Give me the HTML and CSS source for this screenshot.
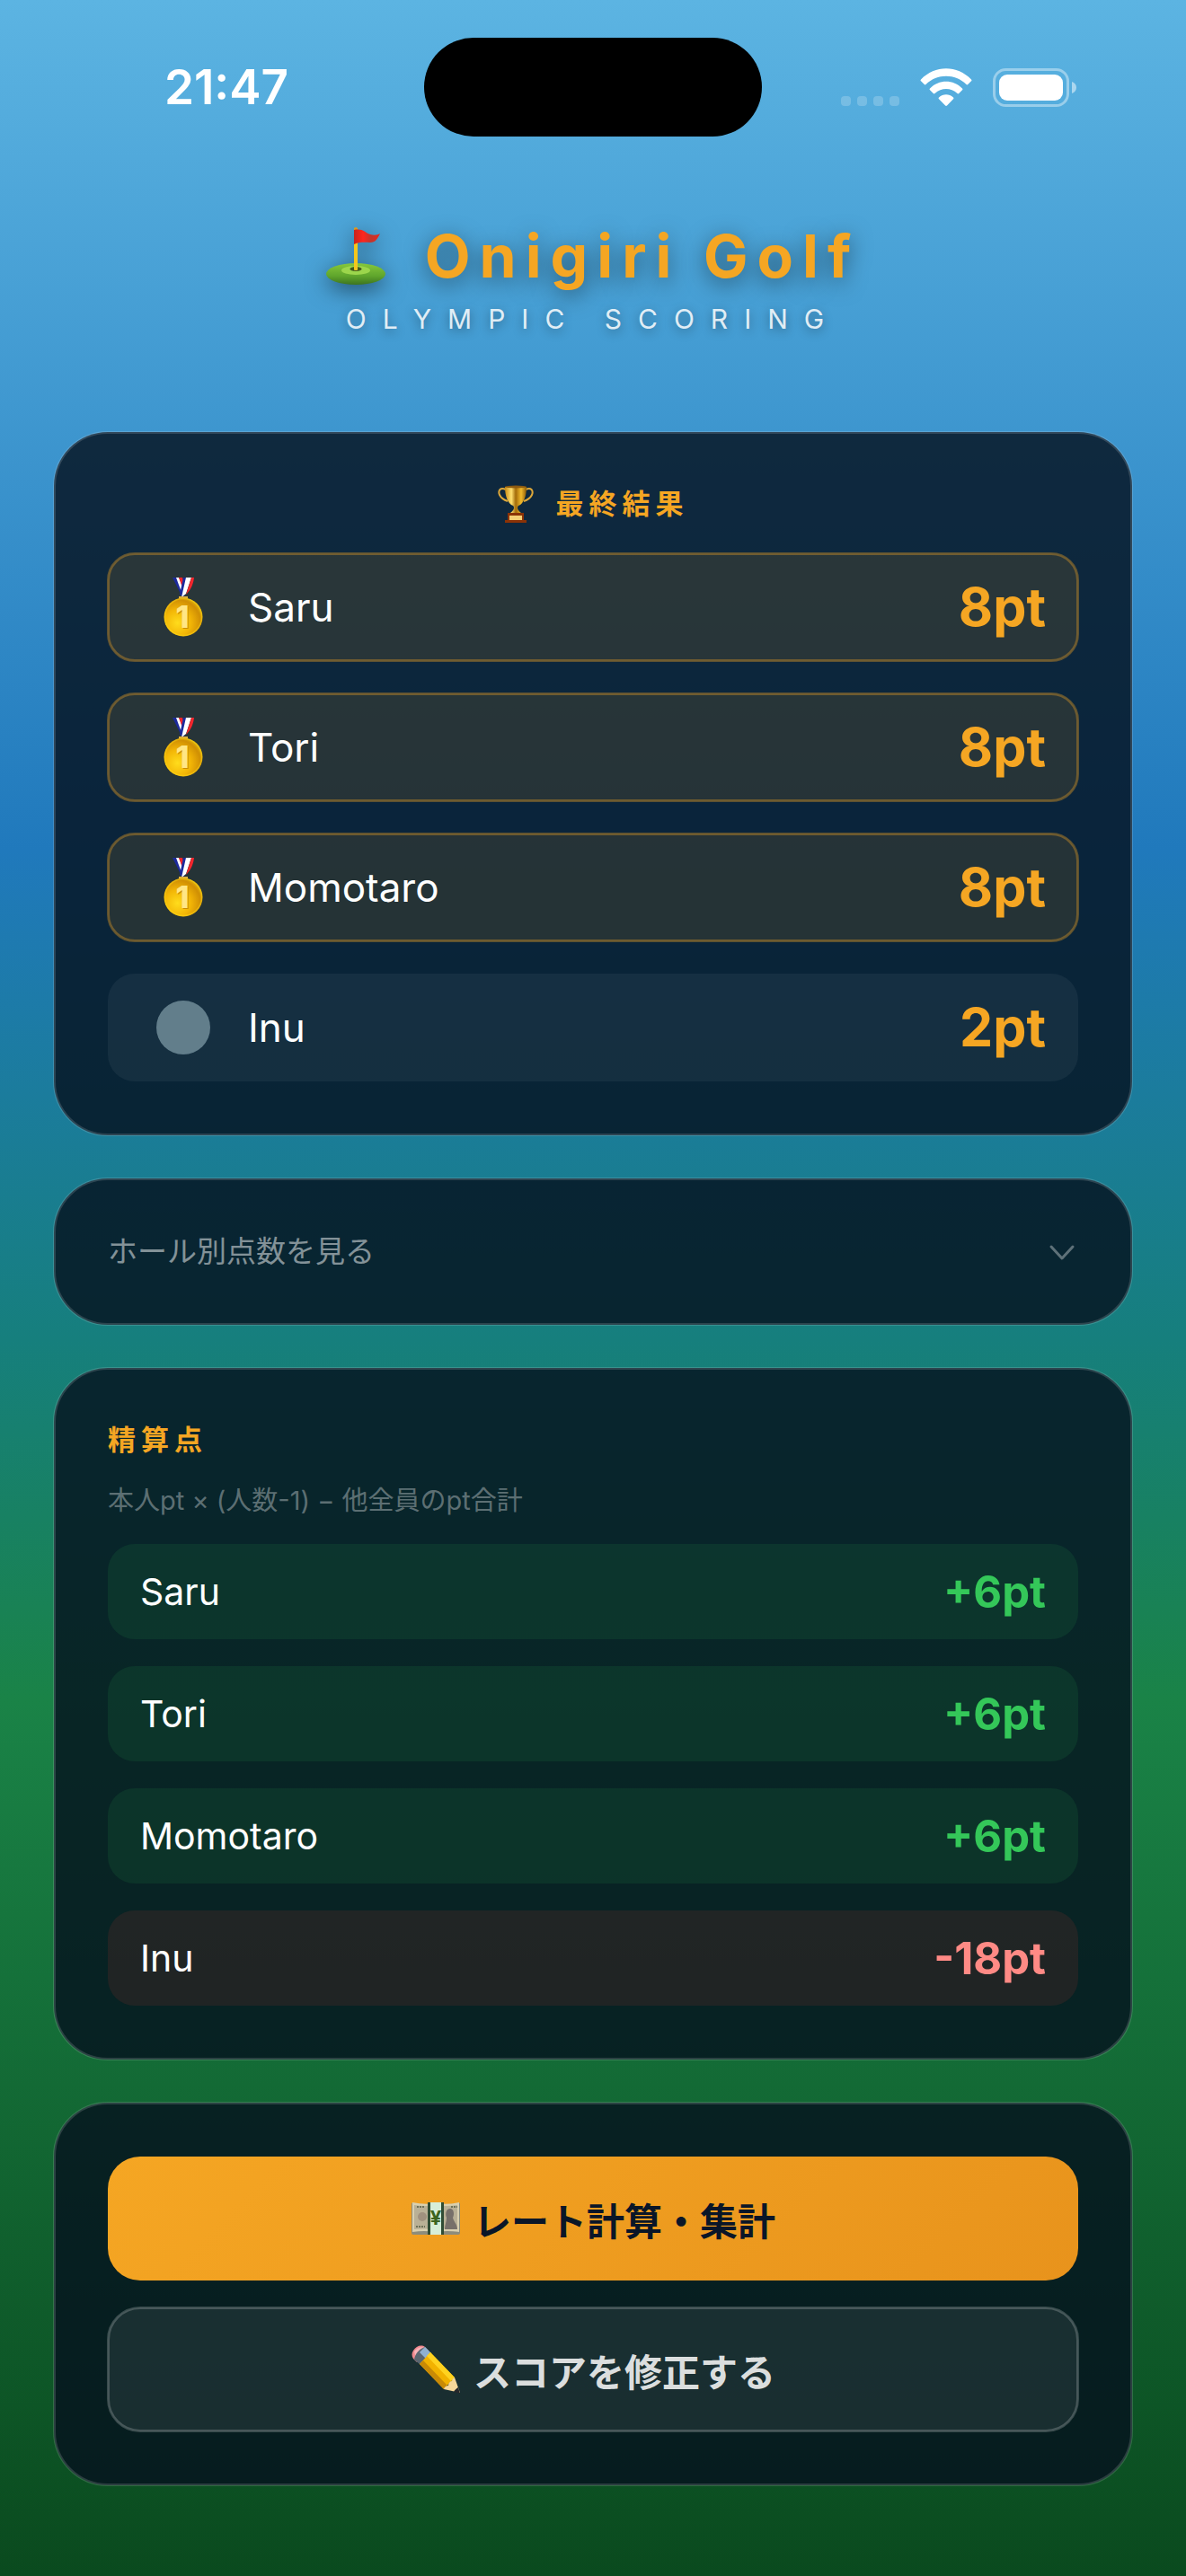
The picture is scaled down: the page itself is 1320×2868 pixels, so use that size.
FILE: index.html
```html
<!DOCTYPE html>
<html lang="ja">
<head>
  <meta charset="UTF-8" />
  <meta name="viewport" content="width=device-width, initial-scale=1.0" />
  <title>Onigiri Golf</title>
  <link rel="stylesheet" href="styles.css">
</head>
<body>
  <!-- shared icons -->
  <svg class="defs" width="0" height="0" aria-hidden="true">
    <defs>
      <radialGradient id="gold" cx="0.35" cy="0.65" r="0.75">
        <stop offset="0" stop-color="#ffdc1c" />
        <stop offset="0.45" stop-color="#f3b606" />
        <stop offset="0.8" stop-color="#d08f04" />
        <stop offset="1" stop-color="#e8c010" />
      </radialGradient>
      <symbol id="medal" viewBox="0 0 44 66">
        <path d="M10 0h5l9 19-3 3z" fill="#1c2a9c" />
        <path d="M14 0h3l6 14-2 5z" fill="#fff" />
        <path d="M17 0h4l3 10-2 4z" fill="#f3262d" />
        <path d="M22 0h4l-5 21-3-2z" fill="#1c2a9c" />
        <path d="M25 0h6l-6 18-5 4z" fill="#fff" />
        <path d="M31 0h3c-1 8-4 14-9 19z" fill="#f3262d" />
        <path d="M18 24v-2h8v2" fill="none" stroke="#e0b040" stroke-width="2" />
        <circle cx="22" cy="44" r="21.500" fill="url(#gold)" />
        <circle cx="22" cy="44" r="20.500" fill="none" stroke="#ffe11a" stroke-opacity="0.4" stroke-width="1.500" />
        <text class="medal-shade" x="22" y="57" text-anchor="middle">1</text>
        <text class="medal-num" x="21" y="56" text-anchor="middle">1</text>
      </symbol>
    </defs>
  </svg>

  <div class="status-bar">
    <div class="status-time">21:47</div>
    <div class="island"></div>
    <div class="status-icons">
      <svg width="65" height="43" viewBox="0 0 65 43" fill="#fff" fill-opacity="0.2">
        <rect x="0" y="31" width="11" height="11" rx="4" />
        <rect x="18" y="31" width="11" height="11" rx="4" />
        <rect x="36" y="31" width="11" height="11" rx="4" />
        <rect x="54" y="31" width="11" height="11" rx="4" />
      </svg>
      <svg width="58" height="43" viewBox="0 0 58 43" fill="#fff">
        <path d="M1 12.500C16.500-3.800 41.500-3.800 57 12.500c.6.600.6 1.200 0 1.800l-3.800 3.700c-.6.600-1.100.6-1.700 0C39 5.700 19 5.700 6.500 18c-.6.600-1.100.6-1.700 0L1 14.300c-.6-.6-.6-1.200 0-1.800z" />
        <path d="M11 22.500c10-10.300 26-10.300 36 0 .6.600.6 1.200 0 1.800l-3.800 3.800c-.6.600-1.100.6-1.700 0-7.200-6.800-17.800-6.800-25 0-.6.600-1.100.6-1.700 0L11 24.300c-.6-.6-.6-1.200 0-1.800z" />
        <path d="M21 32.500c4.600-4.300 11.400-4.300 16 0 .6.600.6 1.200 0 1.800L30 41.500c-.6.600-1.300.6-1.900 0L21 34.300c-.6-.6-.6-1.200 0-1.800z" />
      </svg>
      <svg width="93" height="43" viewBox="0 0 93 43">
        <rect x="1.500" y="1.500" width="82" height="40" rx="13" fill="none" stroke="#fff" stroke-opacity="0.4" stroke-width="3" />
        <rect x="7" y="7" width="71" height="29" rx="9" fill="#fff" />
        <path d="M88 15c3 1 5 3.500 5 6.500s-2 5.500-5 6.500z" fill="#fff" fill-opacity="0.5" />
      </svg>
    </div>
  </div>

  <header class="header">
    <h1 class="logo">
      <svg class="logo-flag" width="66" height="64" viewBox="0 0 66 64">
        <defs>
          <linearGradient id="grass" x1="0" y1="0" x2="0" y2="1">
            <stop offset="0" stop-color="#86c83c" />
            <stop offset="0.6" stop-color="#5fa52c" />
            <stop offset="1" stop-color="#3d7420" />
          </linearGradient>
          <linearGradient id="flag" x1="0" y1="0" x2="1" y2="0">
            <stop offset="0" stop-color="#c8231c" />
            <stop offset="0.35" stop-color="#ff261e" />
            <stop offset="0.65" stop-color="#c2352c" />
            <stop offset="1" stop-color="#e8281f" />
          </linearGradient>
        </defs>
        <ellipse cx="33" cy="52" rx="33" ry="12" fill="url(#grass)" />
        <ellipse cx="33" cy="48" rx="16" ry="5" fill="#9cd64c" />
        <ellipse cx="33" cy="46.500" rx="6.500" ry="2.500" fill="#41581f" />
        <rect x="31" y="1" width="4" height="47" rx="1" fill="#f5c61c" />
        <circle cx="33" cy="2" r="2" fill="#d89a20" />
        <path d="M31 3c10-2 12 3 18 5 4 1 8 1 11-1-3 6-5 10-11 10-7 0-11-1-18 2z" fill="url(#flag)" />
      </svg>
      <span>Onigiri Golf</span>
    </h1>
    <p class="tagline">OLYMPIC SCORING</p>
  </header>

  <main class="content">
    <section class="card result-card">
      <h2 class="card-title centered">
        <svg width="40" height="42" viewBox="0 0 40 42">
          <defs>
            <linearGradient id="cup" x1="0" y1="0" x2="1" y2="0">
              <stop offset="0" stop-color="#c88a12" />
              <stop offset="0.3" stop-color="#ffe070" />
              <stop offset="0.5" stop-color="#a36a08" />
              <stop offset="0.75" stop-color="#f0b92c" />
              <stop offset="1" stop-color="#8c5a06" />
            </linearGradient>
          </defs>
          <path d="M9 5C3 2 0 6 2 11c2 4 6 6 9 7M31 5c6-3 9 1 7 6-2 4-6 6-9 7" fill="none" stroke="#dca73a" stroke-width="2" />
          <path d="M8 2h24c0 10-3 19-9 21-2 2-1 5 3 8H14c4-3 5-6 3-8C11 21 8 12 8 2z" fill="url(#cup)" />
          <ellipse cx="20" cy="2" rx="12" ry="1.500" fill="#8c5a10" />
          <path d="M11 31h18v8h3v3H8v-3h3z" fill="#8a3206" />
          <rect x="13" y="34" width="14" height="5" fill="#f4cf74" />
        </svg>
        <span>最終結果</span>
      </h2>
      <ol class="ranking">
        <li class="rank-row winner">
          <span class="badge"><svg width="44" height="66"><use href="#medal" /></svg></span>
          <span class="rank-name">Saru</span>
          <span class="rank-pt">8pt</span>
        </li>
        <li class="rank-row winner">
          <span class="badge"><svg width="44" height="66"><use href="#medal" /></svg></span>
          <span class="rank-name">Tori</span>
          <span class="rank-pt">8pt</span>
        </li>
        <li class="rank-row winner">
          <span class="badge"><svg width="44" height="66"><use href="#medal" /></svg></span>
          <span class="rank-name">Momotaro</span>
          <span class="rank-pt">8pt</span>
        </li>
        <li class="rank-row">
          <span class="badge"><span class="dot"></span></span>
          <span class="rank-name">Inu</span>
          <span class="rank-pt">2pt</span>
        </li>
      </ol>
    </section>

    <section class="card">
      <button class="toggle" type="button" aria-expanded="false">
        <span>ホール別点数を見る</span>
        <svg width="36" height="24" viewBox="0 0 36 24" fill="none" stroke="#fff" stroke-opacity="0.35" stroke-width="3" stroke-linecap="round" stroke-linejoin="round">
          <path d="M6 6l12 13L30 6" />
        </svg>
      </button>
    </section>

    <section class="card settle-card">
      <h2 class="card-title">精算点</h2>
      <p class="formula">本人pt × (人数-1) − 他全員のpt合計</p>
      <ul class="settle-list">
        <li class="settle-row plus"><span>Saru</span><strong>+6pt</strong></li>
        <li class="settle-row plus"><span>Tori</span><strong>+6pt</strong></li>
        <li class="settle-row plus"><span>Momotaro</span><strong>+6pt</strong></li>
        <li class="settle-row minus"><span>Inu</span><strong>-18pt</strong></li>
      </ul>
    </section>

    <section class="card actions">
      <button class="btn btn-primary" type="button">
        <svg width="56" height="56" viewBox="0 0 56 56">
          <path d="M1 11q14 2 27 0 13 2 27 0v33q0 2-2 2H3q-2 0-2-2z" fill="#8c8c7c" />
          <path d="M2 10q13 3 26 1 13 2 26-1v33q-13-2-26 0-13-2-26 0z" fill="#d9d0b0" />
          <path d="M4 13q12 2 24 0 12 2 24 0v27q-12-1-24 0-12-1-24 0z" fill="#b9b096" />
          <circle cx="13" cy="26" r="5" fill="#a0917f" />
          <path d="M7 15h9M6 37h10M45 15h7" stroke="#6d7158" stroke-width="2" stroke-dasharray="2 1" />
          <path d="M38 40c0-5 2-8 2-13-2-5 0-10 4-10s5 6 3 10c1 5 5 7 5 13z" fill="#77706a" />
          <rect x="19" y="10" width="18" height="36" fill="#2f4c34" />
          <rect x="22" y="10" width="12" height="36" fill="#d7eed8" />
          <text class="yen" x="28" y="35" text-anchor="middle">¥</text>
        </svg>
        <span>レート計算・集計</span>
      </button>
      <button class="btn btn-secondary" type="button">
        <svg width="56" height="56" viewBox="0 0 56 56">
          <path d="M3 7c3-5 9-7 13-4l4 4L7 20l-4-4c-2-3-2-6 0-9z" fill="#f08a90" />
          <path d="M4 8c3-4 8-6 11-4l2 2L6 16z" fill="#f9b4b8" />
          <path d="M16 3l7 7L11 23l-7-6c1-7 6-12 12-14z" fill="#5a6670" />
          <path d="M16 3l7 7-6 6-7-7z" fill="#8fb0cf" />
          <path d="M22 9l27 28-12 13L10 22z" fill="#f2b200" />
          <path d="M22 9l27 28-4 4L18 13z" fill="#ffd21f" />
          <path d="M14 18l27 28-4 4L10 22z" fill="#c98a06" />
          <path d="M49 37l6 17-18-4c1-3 3-4 5-4 0-3 2-5 4-5 0-2 1-3 3-4z" fill="#f7d79a" />
          <path d="M53 48l2 7-7-2c1-2 3-4 5-5z" fill="#25272b" />
        </svg>
        <span>スコアを修正する</span>
      </button>
    </section>
  </main>
</body>
</html>
```

FILE: styles.css
```css
:root {
  --gold: #f5a623;
  --green: #34c759;
  --red: #ff8a85;
}

* {
  box-sizing: border-box;
}

body {
  margin: 0;
  min-height: 100vh;
  padding-bottom: 100px;
  font-family: Inter, "Noto Sans CJK JP", sans-serif;
  color: #ffffff;
  background: linear-gradient(180deg, #5cb4e2 0%, #2079bc 33%, #167f7d 52%, #1a8347 66%, #0a4a1e 100%);
}

h1, h2, p, ol, ul {
  margin: 0;
  padding: 0;
}

ol, ul {
  list-style: none;
}

svg {
  display: block;
  flex-shrink: 0;
}

button {
  font-family: inherit;
  color: inherit;
  border: none;
  cursor: pointer;
}

.defs {
  position: absolute;
}

/* status bar */
.status-bar {
  display: grid;
  grid-template-columns: 1fr auto 1fr;
  align-items: center;
  padding-top: 42px;
}

.status-time {
  padding-left: 32px;
  text-align: center;
  font-size: 53px;
  line-height: 60px;
  font-weight: 600;
}

.island {
  width: 376px;
  height: 110px;
  border-radius: 55px;
  background: #000000;
}

.status-icons {
  display: flex;
  justify-content: flex-end;
  gap: 23px;
  padding-right: 122px;
}

/* header */
.header {
  padding: 93px 60px 108px;
  text-align: center;
}

.logo {
  display: flex;
  justify-content: center;
  align-items: center;
  gap: 44px;
  font-size: 66px;
  line-height: 80px;
  font-weight: 700;
  letter-spacing: 10px;
  color: var(--gold);
  text-shadow: 0 6px 24px rgba(0, 0, 0, 0.5);
}

.logo-flag {
  filter: drop-shadow(0 6px 12px rgba(0, 0, 0, 0.5));
}

.tagline {
  margin-top: 12px;
  font-size: 30px;
  line-height: 36px;
  letter-spacing: 18px;
  color: rgba(255, 255, 255, 0.85);
  text-shadow: 0 3px 12px rgba(0, 0, 0, 0.4);
}

/* cards */
.content {
  display: flex;
  flex-direction: column;
  gap: 48px;
  padding: 0 60px;
}

.card {
  padding: 60px;
  border-radius: 60px;
  background: rgba(5, 17, 30, 0.82);
  outline: 3px solid rgba(255, 255, 255, 0.15);
  outline-offset: -2px;
}

.card-title {
  display: flex;
  align-items: center;
  gap: 25px;
  font-size: 31px;
  line-height: 39px;
  font-weight: 700;
  letter-spacing: 6px;
  color: var(--gold);
}

.card-title svg {
  margin: -2px 0;
}

.centered {
  justify-content: center;
}

/* final result */
.ranking {
  display: flex;
  flex-direction: column;
  gap: 36px;
  margin-top: 36px;
}

.rank-row {
  display: flex;
  align-items: center;
  gap: 24px;
  height: 120px;
  padding: 0 36px;
  border-radius: 30px;
  background: rgba(255, 255, 255, 0.05);
}

.rank-row.winner {
  background: rgba(245, 166, 35, 0.12);
  outline: 3px solid rgba(245, 166, 35, 0.35);
  outline-offset: -2px;
}

.badge {
  display: flex;
  justify-content: center;
  width: 96px;
}

.dot {
  width: 60px;
  height: 60px;
  border-radius: 50%;
  background: #627e8b;
}

.medal-num,
.medal-shade {
  font-size: 34px;
  font-weight: 800;
  fill: #ffe684;
}

.medal-shade {
  fill: #c98c08;
}

.rank-name {
  flex: 1;
  font-size: 44px;
  line-height: 54px;
}

.rank-pt {
  font-size: 59px;
  line-height: 72px;
  font-weight: 700;
  color: var(--gold);
}

/* per-hole toggle */
.toggle {
  display: flex;
  justify-content: space-between;
  align-items: center;
  width: 100%;
  padding: 0;
  background: none;
  font-size: 33px;
  line-height: 43px;
  color: rgba(255, 255, 255, 0.5);
}

/* settlement */
.formula {
  margin-top: 30px;
  font-size: 29px;
  line-height: 37px;
  color: rgba(255, 255, 255, 0.35);
}

.settle-list {
  display: flex;
  flex-direction: column;
  gap: 30px;
  margin-top: 30px;
}

.settle-row {
  display: flex;
  justify-content: space-between;
  align-items: center;
  height: 106px;
  padding: 0 36px;
  border-radius: 30px;
  font-size: 41px;
}

.settle-row strong {
  font-size: 49px;
  font-weight: 700;
}

.plus {
  background: rgba(52, 199, 89, 0.1);
}

.plus strong {
  color: var(--green);
}

.minus {
  background: rgba(255, 59, 48, 0.1);
}

.minus strong {
  color: var(--red);
}

/* buttons */
.actions {
  display: flex;
  flex-direction: column;
  gap: 30px;
}

.btn {
  display: flex;
  justify-content: center;
  align-items: center;
  gap: 14px;
  height: 138px;
  border-radius: 36px;
  font-size: 42px;
  font-weight: 600;
}

.btn-primary {
  color: #0a1628;
  background: linear-gradient(135deg, #f5a623, #e8931c);
}

.btn-secondary {
  color: rgba(255, 255, 255, 0.85);
  background: rgba(255, 255, 255, 0.08);
  outline: 3px solid rgba(255, 255, 255, 0.2);
  outline-offset: -2px;
}

.yen {
  font-size: 22px;
  font-weight: 700;
  fill: #3c6420;
}
```
